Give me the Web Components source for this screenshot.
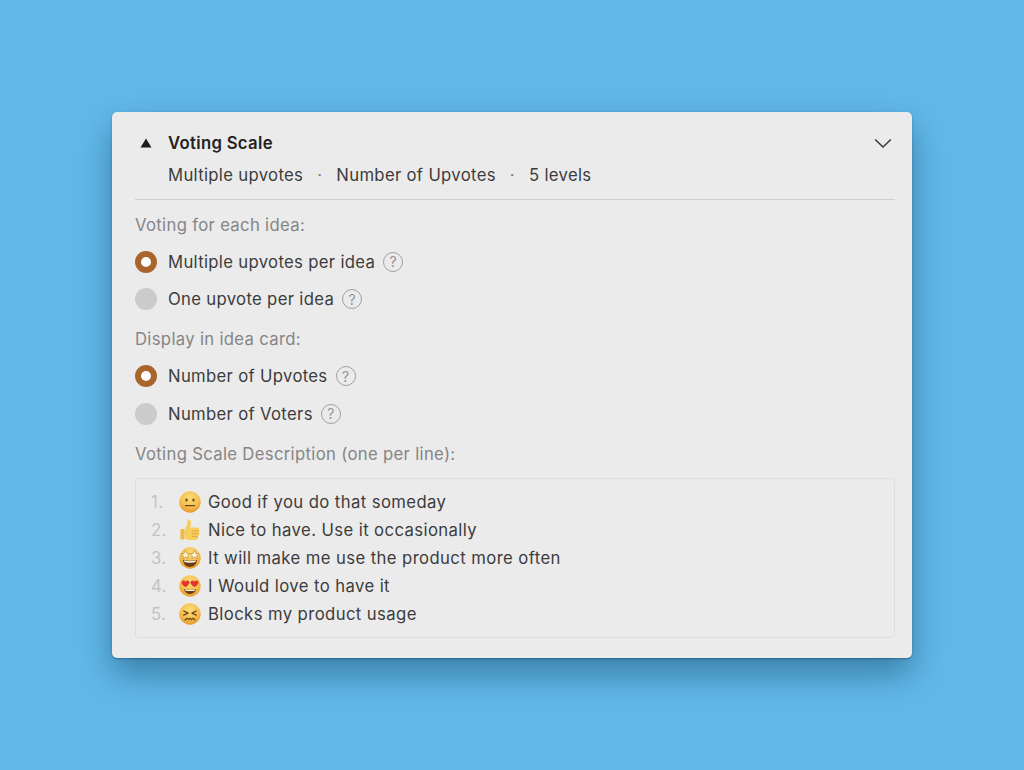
<!DOCTYPE html>
<html>
<head>
<meta charset="utf-8">
<title>Voting Scale</title>
<style>
    html, body { margin: 0; height: 100%; }
    body {
        background: #62b9e9;
        font-family: Inter, "Liberation Sans", sans-serif;
        font-size: 16.7px;
        letter-spacing: 0.32px;
        color: #3c3c3c;
    }
    .stage {
        display: flex;
        justify-content: center;
        padding-top: 112px;
    }
</style>
</head>
<body>
<div class="stage">
    <voting-card>
        <card-header slot="header" title="Voting Scale">
            <span>Multiple upvotes</span>
            <span>Number of Upvotes</span>
            <span>5 levels</span>
        </card-header>

        <field-label first>Voting for each idea:</field-label>
        <radio-option checked>Multiple upvotes per idea</radio-option>
        <radio-option>One upvote per idea</radio-option>

        <field-label>Display in idea card:</field-label>
        <radio-option checked>Number of Upvotes</radio-option>
        <radio-option>Number of Voters</radio-option>

        <field-label>Voting Scale Description (one per line):</field-label>
        <scale-box>
            <scale-line num="1" face="neutral">Good if you do that someday</scale-line>
            <scale-line num="2" face="thumb">Nice to have. Use it occasionally</scale-line>
            <scale-line num="3" face="stars">It will make me use the product more often</scale-line>
            <scale-line num="4" face="hearts">I Would love to have it</scale-line>
            <scale-line num="5" face="angry">Blocks my product usage</scale-line>
        </scale-box>
    </voting-card>
</div>

<script>
class VotingCard extends HTMLElement {
    connectedCallback() {
        this.attachShadow({ mode: 'open' });
        this.shadowRoot.innerHTML = `
            <style>
                :host {
                    display: block;
                    box-sizing: border-box;
                    width: 800px;
                    height: 546px;
                    padding: 16px 17px 21px 23px;
                    background: #ebebeb;
                    border-radius: 5px;
                    box-shadow: 0 1px 2px rgba(20, 70, 100, 0.5), 0 16px 34px rgba(15, 65, 100, 0.5);
                }
            </style>
            <slot name="header"></slot>
            <slot></slot>
        `;
    }
}

class CardHeader extends HTMLElement {
    connectedCallback() {
        this.attachShadow({ mode: 'open' });
        this.shadowRoot.innerHTML = `
            <style>
                :host {
                    display: block;
                    height: 71px;
                    border-bottom: 1px solid #cfcfcf;
                }
                .top {
                    display: flex;
                    align-items: center;
                    height: 30px;
                }
                .arrow {
                    width: 33px;
                    display: flex;
                    padding-left: 5px;
                    box-sizing: border-box;
                }
                .title {
                    flex: 1;
                    font-weight: 600;
                    color: #222;
                }
                .sub {
                    display: flex;
                    align-items: center;
                    height: 34px;
                    padding-left: 33px;
                }
                ::slotted(span:not(:last-child))::after {
                    content: '·';
                    margin: 0 14px;
                    color: #777;
                }
                .chevron { margin-right: 3px; }
            </style>
            <div class="top">
                <div class="arrow">
                    <svg width="12" height="10" viewBox="0 0 12 10"><path d="M6 0.5 L11.5 9.5 H0.5 Z" fill="#1d1d1d"/></svg>
                </div>
                <div class="title">${this.getAttribute('title')}</div>
                <svg class="chevron" width="18" height="11" viewBox="0 0 18 11" fill="none">
                    <path d="M1.2 1.5 L9 9 L16.8 1.5" stroke="#3a3a3a" stroke-width="1.6"/>
                </svg>
            </div>
            <div class="sub"><slot></slot></div>
        `;
        this.removeAttribute('title');
    }
}

class FieldLabel extends HTMLElement {
    connectedCallback() {
        this.attachShadow({ mode: 'open' });
        this.shadowRoot.innerHTML = `
            <style>
                :host {
                    display: flex;
                    align-items: center;
                    height: 36.5px;
                    margin-top: 3px;
                    color: #858585;
                }
                :host([first]) { margin-top: 6.5px; }
            </style>
            <slot></slot>
        `;
    }
}

class RadioOption extends HTMLElement {
    connectedCallback() {
        this.attachShadow({ mode: 'open' });
        this.shadowRoot.innerHTML = `
            <style>
                :host {
                    display: flex;
                    align-items: center;
                    height: 37.5px;
                }
                .dot {
                    box-sizing: border-box;
                    width: 22px;
                    height: 22px;
                    margin-right: 11px;
                    border-radius: 50%;
                    background: #cbcbcb;
                }
                :host([checked]) .dot {
                    background: #fff;
                    border: 6px solid #a8662c;
                }
            </style>
            <span class="dot"></span>
            <slot></slot>
            <help-icon></help-icon>
        `;
    }
}

class HelpIcon extends HTMLElement {
    connectedCallback() {
        this.attachShadow({ mode: 'open' });
        this.shadowRoot.innerHTML = `
            <style>
                :host {
                    display: inline-flex;
                    align-items: center;
                    justify-content: center;
                    box-sizing: border-box;
                    width: 20px;
                    height: 20px;
                    margin-left: 8px;
                    border: 1.5px solid #a0a0a0;
                    border-radius: 50%;
                    font-size: 14px;
                    letter-spacing: 0;
                    color: #949494;
                }
            </style>
            ?
        `;
    }
}

class ScaleBox extends HTMLElement {
    connectedCallback() {
        this.attachShadow({ mode: 'open' });
        this.shadowRoot.innerHTML = `
            <style>
                :host {
                    display: block;
                    box-sizing: border-box;
                    height: 159.5px;
                    margin-top: 6px;
                    padding: 8.5px 15px;
                    border: 1px solid #dedede;
                    border-radius: 4px;
                }
            </style>
            <slot></slot>
        `;
    }
}

const faceBase = `<defs><radialGradient id="g" cx="50%" cy="30%" r="70%"><stop offset="0" stop-color="#fbdc78"/><stop offset="0.6" stop-color="#f6c052"/><stop offset="1" stop-color="#e8982a"/></radialGradient></defs><circle cx="11" cy="11" r="10.7" fill="url(#g)"/>`;

const faces = {
    neutral: faceBase + `
        <ellipse cx="7.5" cy="9" rx="1.2" ry="1.6" fill="#6a4516"/><ellipse cx="14.5" cy="9" rx="1.2" ry="1.6" fill="#6a4516"/>
        <path d="M6.5 14.6 H15.5" stroke="#6a4516" stroke-width="1.2" stroke-linecap="round"/>`,
    thumb: `
        <path d="M8.6 1 C11 0.4 12.4 2 12 4.5 L11.2 8.4 H18 C20.2 8.4 20.8 10.4 20 11.6 C20.8 12.6 20.6 14.2 19.6 14.8 C20.2 15.8 19.8 17.2 18.8 17.6 C19.2 19 18.4 21 16.6 21 H9.6 C8 21 6.8 20.2 5.6 19.8 V10.4 C7.6 8 8.4 5 8.6 1 Z" fill="#f7cd5c"/>
        <rect x="1.4" y="10" width="4" height="10.6" rx="1" fill="#f0b846"/>
        <path d="M13 12 H20 M13 14.8 H19.6 M13 17.6 H18.8" stroke="#dc9f33" stroke-width="0.8"/>`,
    stars: faceBase + `
        <path d="M6.5 3.6 L7.9 6.4 L10.8 6.8 L8.6 8.8 L9.2 11.6 L6.5 10.2 L3.8 11.6 L4.4 8.8 L2.2 6.8 L5.1 6.4 Z" fill="#fff3cf" stroke="#9a6a20" stroke-width="0.5"/>
        <path d="M15.5 3.6 L16.9 6.4 L19.8 6.8 L17.6 8.8 L18.2 11.6 L15.5 10.2 L12.8 11.6 L13.4 8.8 L11.2 6.8 L14.1 6.4 Z" fill="#fff3cf" stroke="#9a6a20" stroke-width="0.5"/>
        <path d="M4 12.8 C8 14.2 14 14.2 18 12.8 C17.6 17.6 14.4 20 11 20 C7.6 20 4.4 17.6 4 12.8 Z" fill="#6b3d14"/>
        <path d="M5 13.4 C9 14.5 13 14.5 17 13.4 L16.6 15 C13 15.9 9 15.9 5.4 15 Z" fill="#fff"/>`,
    hearts: faceBase + `
        <path d="M6.5 12 C2.5 9.4 2 7.6 2.8 6.4 C3.8 5 5.8 5.2 6.5 6.8 C7.2 5.2 9.2 5 10.2 6.4 C11 7.6 10.5 9.4 6.5 12 Z" fill="#e0352f"/>
        <path d="M15.5 12 C11.5 9.4 11 7.6 11.8 6.4 C12.8 5 14.8 5.2 15.5 6.8 C16.2 5.2 18.2 5 19.2 6.4 C20 7.6 19.5 9.4 15.5 12 Z" fill="#e0352f"/>
        <path d="M5 14 C8 15.2 14 15.2 17 14 C16.4 17.4 13.6 19 11 19 C8.4 19 5.6 17.4 5 14 Z" fill="#6b3d14"/>
        <path d="M6 14.5 C9 15.3 13 15.3 16 14.5 L15.6 15.7 C13 16.2 9 16.2 6.4 15.7 Z" fill="#fff"/>`,
    angry: faceBase + `
        <path d="M4.8 8 L9 10.2 L4.8 12.2 M17.2 8 L13 10.2 L17.2 12.2" fill="none" stroke="#6a4516" stroke-width="1.3" stroke-linecap="round" stroke-linejoin="round"/>
        <path d="M6 17 L8 15.2 L9.7 16.6 L11 15.2 L12.3 16.6 L14 15.2 L16 17" fill="none" stroke="#6a4516" stroke-width="1.2" stroke-linecap="round" stroke-linejoin="round"/>`
};

class ScaleLine extends HTMLElement {
    connectedCallback() {
        this.attachShadow({ mode: 'open' });
        this.shadowRoot.innerHTML = `
            <style>
                :host {
                    display: flex;
                    align-items: center;
                    height: 28.2px;
                    letter-spacing: 0.4px;
                }
                .num {
                    width: 28px;
                    color: #c2c2c2;
                }
                svg { margin-right: 7px; }
            </style>
            <span class="num">${this.getAttribute('num')}.</span>
            <svg width="22" height="22" viewBox="0 0 22 22">${faces[this.getAttribute('face')]}</svg>
            <slot></slot>
        `;
    }
}

customElements.define('voting-card', VotingCard);
customElements.define('card-header', CardHeader);
customElements.define('field-label', FieldLabel);
customElements.define('radio-option', RadioOption);
customElements.define('help-icon', HelpIcon);
customElements.define('scale-box', ScaleBox);
customElements.define('scale-line', ScaleLine);
</script>
</body>
</html>
